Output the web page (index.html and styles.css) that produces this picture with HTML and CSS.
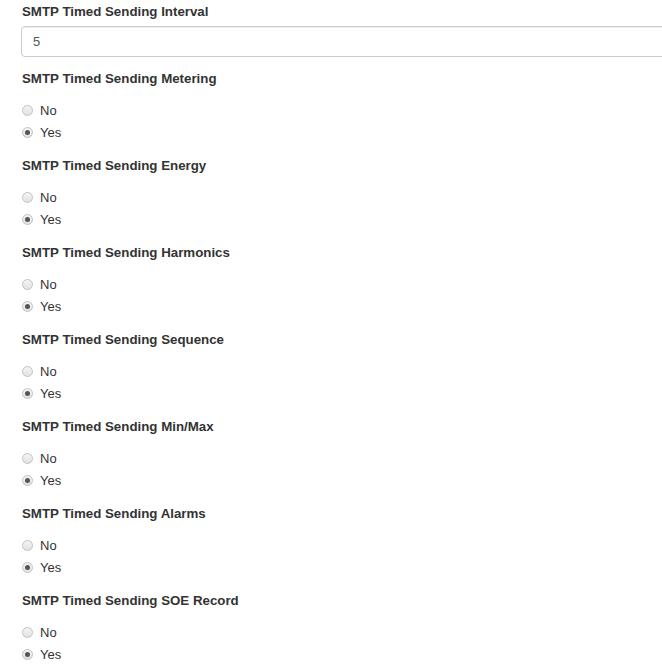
FILE: index.html
```html
<!DOCTYPE html>
<html>
	<head>
		<link rel="stylesheet" href="styles.css">
	</head>
	<body>
		<div class="form">
			<div class="group">
				<label class="title">SMTP Timed Sending Interval</label>
				<input class="field" type="text" value="5" />
			</div>
			<div class="group">
				<label class="title">SMTP Timed Sending Metering</label>
				<div class="opt"><span class="radio"></span>No</div>
				<div class="opt"><span class="radio on"></span>Yes</div>
			</div>
			<div class="group">
				<label class="title">SMTP Timed Sending Energy</label>
				<div class="opt"><span class="radio"></span>No</div>
				<div class="opt"><span class="radio on"></span>Yes</div>
			</div>
			<div class="group">
				<label class="title">SMTP Timed Sending Harmonics</label>
				<div class="opt"><span class="radio"></span>No</div>
				<div class="opt"><span class="radio on"></span>Yes</div>
			</div>
			<div class="group">
				<label class="title">SMTP Timed Sending Sequence</label>
				<div class="opt"><span class="radio"></span>No</div>
				<div class="opt"><span class="radio on"></span>Yes</div>
			</div>
			<div class="group">
				<label class="title">SMTP Timed Sending Min/Max</label>
				<div class="opt"><span class="radio"></span>No</div>
				<div class="opt"><span class="radio on"></span>Yes</div>
			</div>
			<div class="group">
				<label class="title">SMTP Timed Sending Alarms</label>
				<div class="opt"><span class="radio"></span>No</div>
				<div class="opt"><span class="radio on"></span>Yes</div>
			</div>
			<div class="group">
				<label class="title">SMTP Timed Sending SOE Record</label>
				<div class="opt"><span class="radio"></span>No</div>
				<div class="opt"><span class="radio on"></span>Yes</div>
			</div>
		</div>
	</body>
</html>
```

FILE: styles.css
```css
body{
	margin:0;
	background:#FFFFFF;
	font-family:"Liberation Sans", Arial, sans-serif;
	font-size:13px;
	color:#333333;
}
.form{
	padding:2px 0 0 22px;
	overflow:hidden;
}
.group{
	margin-bottom:13px;
}
.title{
	display:block;
	font-weight:bold;
	font-size:13.3px;
	line-height:20px;
	margin-bottom:10px;
}
.group:first-child .title{
	margin-bottom:4px;
}
.group:first-child{
	margin-bottom:12px;
}
.field{
	display:block;
	box-sizing:border-box;
	width:calc(100% + 20px);
	height:31px;
	margin:0 0 0 -1px;
	padding:0 11px;
	border:1px solid #CCCCCC;
	border-radius:4px;
	font:inherit;
	color:#555555;
	box-shadow:inset 0 1px 1px rgba(0,0,0,0.075);
}
.opt{
	display:flex;
	align-items:center;
	height:22px;
	color:#333333;
}
.radio{
	box-sizing:border-box;
	width:11px;
	height:11px;
	margin:0 7px 0 0;
	border:1px solid #C2C2C2;
	border-radius:50%;
	background:linear-gradient(#F4F4F4, #E2E2E2);
	position:relative;
}
.radio.on::after{
	content:"";
	position:absolute;
	left:2px;
	top:2px;
	width:5px;
	height:5px;
	border-radius:50%;
	background:#555555;
}
```
